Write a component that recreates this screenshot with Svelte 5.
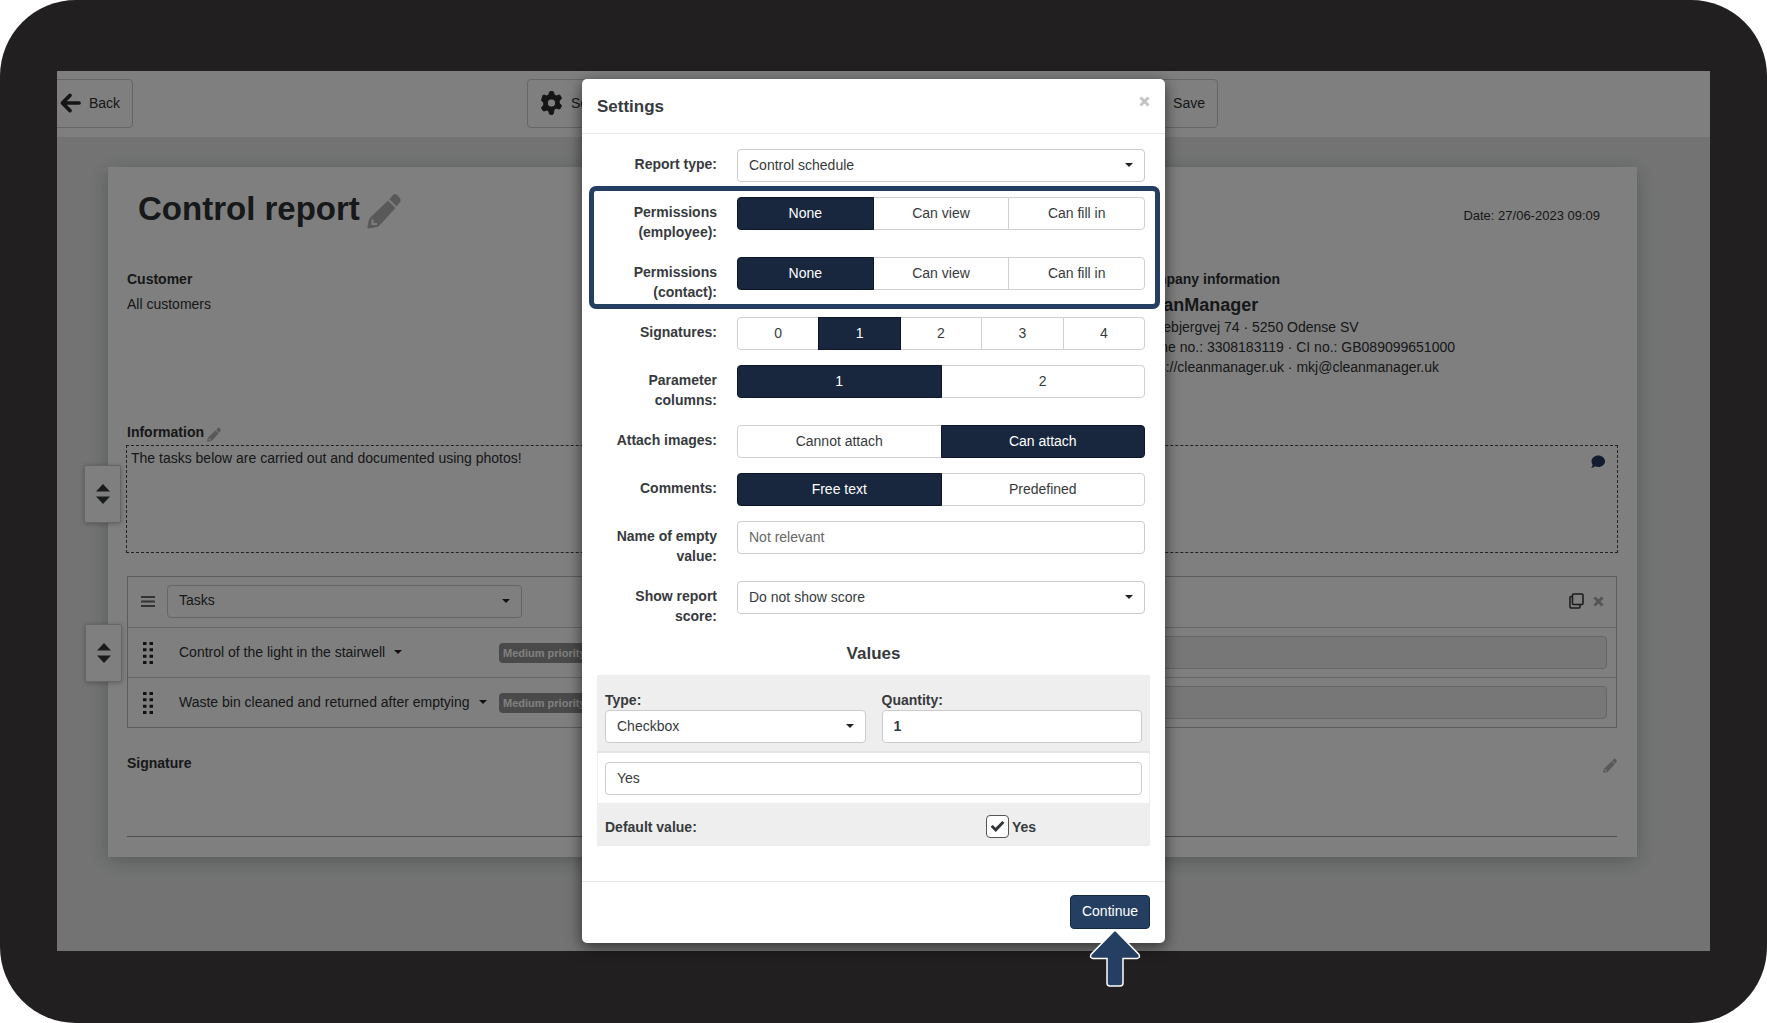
<script lang="ts">
  type Toggle = { id: string; label: string; options: string[]; value: string };

  let permissions: Toggle[] = $state([
    { id: 'employee', label: 'Permissions (employee):', options: ['None', 'Can view', 'Can fill in'], value: 'None' },
    { id: 'contact', label: 'Permissions (contact):', options: ['None', 'Can view', 'Can fill in'], value: 'None' }
  ]);

  let toggles: Toggle[] = $state([
    { id: 'signatures', label: 'Signatures:', options: ['0', '1', '2', '3', '4'], value: '1' },
    { id: 'columns', label: 'Parameter columns:', options: ['1', '2'], value: '1' },
    { id: 'images', label: 'Attach images:', options: ['Cannot attach', 'Can attach'], value: 'Can attach' },
    { id: 'comments', label: 'Comments:', options: ['Free text', 'Predefined'], value: 'Free text' }
  ]);

  const tasks = ['Control of the light in the stairwell', 'Waste bin cleaned and returned after emptying'];

  let quantity = $state('1');
  let valueName = $state('Yes');
  let isDefault = $state(true);
</script>

{#snippet pencil(size: string)}
  <svg class="pencil {size}" viewBox="0 0 34 36" aria-hidden="true">
    <path d="M21 7.500 28.500 15 12.500 32.500Q11 34 9 34.300L1.800 35.500Q.3 35.600.5 34L1.600 28Q2 26 3.300 24.600Z" />
    <path d="M22.300 6.200 26 2Q28 .2 30.200 2L32.500 4.600Q34.500 7.200 32.800 9.300L29.700 13.600Z" />
    <path class="notch" d="M5.500 26.500V31H10" />
  </svg>
{/snippet}

{#snippet cross()}
  <svg class="cross" viewBox="0 0 11 11" width="11" height="11"><path d="M1.500 1.500l8 8M9.500 1.500l-8 8" /></svg>
{/snippet}

{#snippet handle()}
  <button class="handle" aria-label="Move section">
    <svg viewBox="0 0 14 20" width="14" height="20"><path d="M7 0 14 7.500H0ZM0 12.500H14L7 20Z" /></svg>
  </button>
{/snippet}

{#snippet toggleRow(t: Toggle)}
  <div class="row">
    <span class="label" id="{t.id}-label">{t.label}</span>
    <div class="toggle" role="group" aria-labelledby="{t.id}-label">
      {#each t.options as option}
        <button class:active={t.value === option} aria-pressed={t.value === option} onclick={() => (t.value = option)}>{option}</button>
      {/each}
    </div>
  </div>
{/snippet}

<div class="bezel">
  <div class="screen">
    <div class="page">
      <header>
        <button class="tool">
          <svg viewBox="0 0 22 20" width="21" height="20"><path class="line" d="M20 10H3M10.500 2 2.500 10l8 8" /></svg>
          Back
        </button>
        <div class="tools">
          <button class="tool">
            <svg class="gear" viewBox="0 0 24 24" width="23" height="24">
              <path fill-rule="evenodd" d="M9.800.8Q10 0 11 0h2q1 0 1.200.8l.6 2.700q1.200.4 2.200 1.100l2.600-.9q.9-.3 1.400.6l1.200 2.100q.5.900-.2 1.500l-2 1.900q.3 1.200 0 2.400l2 1.900q.7.600.2 1.500l-1.200 2.100q-.5.900-1.400.6l-2.600-.9q-1 .7-2.200 1.100l-.6 2.700Q14 24 13 24h-2q-1 0-1.200-.8l-.6-2.700q-1.200-.4-2.200-1.100l-2.600.9q-.9.300-1.400-.6l-1.200-2.100q-.5-.9.200-1.500l2-1.900q-.3-1.200 0-2.400l-2-1.900q-.7-.6-.2-1.500L3 4.300q.5-.9 1.400-.6l2.600.9q1-.7 2.200-1.100ZM12 7.800a4.200 4.200 0 1 0 0 8.400 4.200 4.200 0 0 0 0-8.400Z" />
            </svg>
            Settings
          </button>
          <button class="tool">
            <svg viewBox="0 0 24 24" width="23" height="24">
              <path fill-rule="evenodd" d="M2 2h16l6 6v14H2ZM6 4v6h11V4ZM13 13a4 4 0 1 0 0 8 4 4 0 0 0 0-8Z" />
            </svg>
            Save
          </button>
        </div>
      </header>

      <main>
        <article>
          <div class="titlebar">
            <h1>Control report {@render pencil('large')}</h1>
            <span class="date">Date: 27/06-2023 09:09</span>
          </div>

          <div class="parties">
            <div>
              <h2>Customer</h2>
              <p>All customers</p>
            </div>
            <div class="company">
              <h2>Company information</h2>
              <p class="name">CleanManager</p>
              <p>Holkebjergvej 74 · 5250 Odense SV</p>
              <p>Phone no.: 3308183119 · CI no.: GB089099651000</p>
              <p>https://cleanmanager.uk · mkj@cleanmanager.uk</p>
            </div>
          </div>

          <h2 class="info-title">Information {@render pencil('small')}</h2>
          <section class="info">
            {@render handle()}
            <p>The tasks below are carried out and documented using photos!</p>
            <svg class="comment" viewBox="0 0 14 14" width="14" height="14">
              <path d="M7.300.5C11 .5 14 3 14 6.200S11 12 7.300 12c-1.200 0-2.300-.2-3.300-.7-1 .9-2.400 1.700-4 1.700 1-1 1.500-2.200 1.600-3.300C.8 8.700.5 7.500.5 6.200.5 3 3.600.5 7.300.5Z" />
            </svg>
          </section>

          <section class="tasks">
            {@render handle()}
            <div class="task-head">
              <svg class="bars" viewBox="0 0 14 11" width="14" height="11"><path d="M0 1h14M0 5.500h14M0 10h14" /></svg>
              <div class="select">
                <select aria-label="Section type"><option>Tasks</option></select>
              </div>
              <div class="actions">
                <button class="icon" aria-label="Copy">
                  <svg viewBox="0 0 15 16" width="15" height="16"><path d="M4.500 1h8.500q1 0 1 1v8.500q0 1-1 1H4.500q-1 0-1-1V2q0-1 1-1ZM3.500 3.500H2q-1 0-1 1V14q0 1 1 1h8q1 0 1-1v-2.500" /></svg>
                </button>
                <button class="icon" aria-label="Remove">{@render cross()}</button>
              </div>
            </div>
            {#each tasks as task}
              <div class="task">
                <svg class="dots" viewBox="0 0 10 22" width="10" height="22">
                  <path d="M0 1.500h3.500M6.500 1.500H10M0 7.800h3.500M6.500 7.800H10M0 14.200h3.500M6.500 14.200H10M0 20.500h3.500M6.500 20.500H10" />
                </svg>
                <div class="task-name"><button class="drop">{task}<i class="caret"></i></button></div>
                <span class="badge">Medium priority</span>
                <input disabled aria-label={task} />
              </div>
            {/each}
          </section>

          <div class="signature">
            <h2>Signature</h2>
            {@render pencil('small')}
          </div>
        </article>
      </main>
    </div>

    <div class="overlay">
      <div class="modal" role="dialog" aria-labelledby="modal-title">
        <div class="modal-header">
          <h3 id="modal-title">Settings</h3>
          <button class="icon" aria-label="Close">{@render cross()}</button>
        </div>

        <div class="modal-body">
          <div class="form">
            <div class="row">
              <label class="label" for="type">Report type:</label>
              <div class="select"><select id="type"><option>Control schedule</option></select></div>
            </div>
            <div class="marked">
              {#each permissions as t}
                {@render toggleRow(t)}
              {/each}
            </div>
            {#each toggles as t}
              {@render toggleRow(t)}
            {/each}
            <div class="row">
              <label class="label" for="empty">Name of empty value:</label>
              <input id="empty" placeholder="Not relevant" />
            </div>
            <div class="row">
              <label class="label" for="score">Show report score:</label>
              <div class="select"><select id="score"><option>Do not show score</option></select></div>
            </div>
          </div>

          <h3 class="values-title">Values</h3>
          <div class="values">
            <div class="value-head">
              <div>
                <label for="value-type">Type:</label>
                <div class="select"><select id="value-type"><option>Checkbox</option></select></div>
              </div>
              <div>
                <label for="quantity">Quantity:</label>
                <input id="quantity" class="strong" bind:value={quantity} />
              </div>
            </div>
            <div class="value-name">
              <input aria-label="Value name" bind:value={valueName} />
            </div>
            <div class="value-default">
              <span>Default value:</span>
              <label><input type="checkbox" bind:checked={isDefault} />Yes</label>
            </div>
          </div>
        </div>

        <div class="modal-footer">
          <button class="continue">Continue</button>
          <svg class="pointer" viewBox="0 0 52 58" width="52" height="58">
            <path d="M24.400 2.500Q26 .5 27.600 2.500L50 25.500Q51.500 29 48 29.500H34V54Q34 57 31 57H21Q18 57 18 54V29.500H4Q.5 29 2 25.500Z" />
          </svg>
        </div>
      </div>
    </div>
  </div>
</div>

<style>
  :global(body) {
    background: #fff;
    color: #373a3d;
    font: 14px/20px "Liberation Sans", Arial, sans-serif;
  }
  .bezel, .bezel * { box-sizing: border-box; }
  h1, h2, h3, p { margin: 0; }
  h2 { font-size: 14px; line-height: 20px; }
  h3 { font-size: 17px; line-height: 20px; }
  button, input, select {
    font: inherit;
    color: inherit;
  }
  svg { display: block; }

  .bezel {
    min-height: 100vh;
    padding: 71px 57px 72px;
    display: flex;
    background: #221f20;
    border-radius: 76px;
  }
  .screen {
    position: relative;
    flex: 1;
    display: flex;
    min-width: 0;
  }
  .page {
    flex: 1;
    min-width: 0;
    overflow: hidden;
    background: #e6e7e7;
    color: #2e3032;
  }

  header {
    display: grid;
    grid-template-columns: 1fr 691px 1fr;
    justify-items: start;
    margin-left: -22px;
    padding: 8px 12px 9px;
    background: #fff;
  }
  .tools {
    display: flex;
    justify-content: space-between;
    width: 100%;
  }
  .tool {
    height: 49px;
    padding: 0 12px 2px;
    display: flex;
    align-items: center;
    gap: 8px;
    background: #fff;
    border: 1px solid #ccc;
    border-radius: 4px;
  }
  .line {
    fill: none;
    stroke: #2a2a2a;
    stroke-width: 3.800;
    stroke-linecap: round;
    stroke-linejoin: round;
  }
  .tool svg {
    fill: #2a2a2a;
    overflow: visible;
  }
  .gear {
    stroke: #2a2a2a;
    stroke-width: 1;
  }

  main {
    margin-left: -22px;
    padding: 30px 73px 90px;
  }
  article {
    padding: 22px 20px 20px 19px;
    background: #fff;
    box-shadow: 0 4px 18px rgba(0, 30, 20, 0.24);
  }
  .titlebar {
    display: flex;
    justify-content: space-between;
    align-items: baseline;
    padding: 0 17px 0 11px;
  }
  h1 {
    display: flex;
    gap: 7px;
    font-size: 33px;
    line-height: 40px;
  }
  .date { font-size: 13px; }
  .pencil {
    fill: #b3b3b3;
    flex: none;
  }
  .pencil.large {
    width: 34px;
    height: 36px;
    margin-top: 4px;
  }
  .pencil.small {
    width: 14px;
    height: 15px;
    margin-top: 5px;
  }
  .notch {
    fill: none;
    stroke: #fff;
    stroke-width: 2;
  }
  .parties {
    display: grid;
    grid-template-columns: 2fr 1fr;
    margin: 40px 0 45px;
  }
  .parties h2 { margin-bottom: 5px; }
  .company { padding-left: 15px; }
  .name {
    font-size: 18px;
    line-height: 23px;
    font-weight: bold;
  }
  .info-title {
    display: flex;
    gap: 3px;
    margin-bottom: 3px;
  }
  .info {
    position: relative;
    display: flex;
    justify-content: space-between;
    height: 108px;
    margin: 0 -1px 23px;
    padding: 2px 12px 0 4px;
    border: 1px dashed #444;
  }
  .comment {
    margin-top: 7px;
    fill: #243a60;
  }
  .handle {
    position: absolute;
    top: 47px;
    left: -43px;
    width: 37px;
    height: 58px;
    padding: 0;
    display: grid;
    place-items: center;
    background: #fff;
    border: 1px solid #ccc;
    border-radius: 2px;
    box-shadow: 0 1px 5px rgba(0, 0, 0, 0.25);
    fill: #333639;
  }
  .info .handle { top: 19px; }

  .tasks {
    position: relative;
    border: 1px solid #bbb;
  }
  .task-head, .task {
    display: grid;
    align-items: center;
    height: 50px;
  }
  .task-head {
    grid-template-columns: 39px 355px 1fr;
    padding-bottom: 2px;
  }
  .task {
    grid-template-columns: 39px 332px auto 1fr;
    padding-right: 9px;
    border-top: 1px solid #ccc;
  }
  .bars, .dots {
    justify-self: center;
    stroke: #666;
    stroke-width: 2;
  }
  .dots {
    stroke: #222;
    stroke-width: 3;
  }
  .actions {
    display: flex;
    align-items: center;
    justify-self: end;
    gap: 9px;
    padding-right: 12px;
  }
  .icon {
    padding: 0;
    background: none;
    border: none;
    fill: none;
    stroke: #333;
    stroke-width: 1.500;
  }
  .cross {
    stroke: #c4c4c4;
    stroke-width: 3;
  }
  .actions .cross { stroke: #aaa; }
  .drop {
    display: flex;
    align-items: center;
    gap: 9px;
    padding: 0 12px 2px;
    background: none;
    border: none;
    white-space: nowrap;
  }
  .caret, .select::after {
    border: 4px solid transparent;
    border-top-color: #222;
    border-bottom: 0;
  }
  .badge {
    padding: 0 4px;
    margin-right: 12px;
    background: #959595;
    color: #fff;
    border-radius: 4px;
    font-size: 11px;
    font-weight: bold;
  }
  .signature {
    display: flex;
    justify-content: space-between;
    height: 84px;
    margin-top: 25px;
    border-bottom: 1px solid #999;
  }

  .overlay {
    position: absolute;
    inset: 0;
    padding: 8px 20px 0 0;
    display: flex;
    justify-content: center;
    align-items: flex-start;
    background: rgba(0, 0, 0, 0.5);
  }
  .modal {
    width: 583px;
    background: #fff;
    border-radius: 5px;
    box-shadow: 0 4px 15px rgba(0, 0, 0, 0.6);
  }
  .modal-header {
    display: flex;
    justify-content: space-between;
    align-items: flex-start;
    padding: 17px 15px 16px;
    border-bottom: 1px solid #e8e8e8;
  }
  .modal-header h3 { padding-top: 1px; }
  .modal-body { padding: 15px 15px 35px; }
  .form { margin-right: 5px; }
  .row {
    display: grid;
    grid-template-columns: 120px 1fr;
    align-items: start;
    gap: 20px;
    margin-bottom: 15px;
  }
  .label {
    padding-top: 5px;
    text-align: right;
  }
  .label, label, .value-default { font-weight: bold; }
  .marked { position: relative; }
  .marked::after {
    content: "";
    position: absolute;
    inset: -11px -15px -7px -8px;
    border: 5px solid #253f63;
    border-radius: 7px;
    pointer-events: none;
  }
  .toggle {
    display: flex;
    height: 33px;
  }
  .toggle button {
    flex: 1;
    padding: 0 0 2px;
    background: #fff;
    border: 1px solid #d0d0d0;
    margin-left: -1px;
  }
  .toggle button:first-child {
    margin-left: 0;
    border-radius: 4px 0 0 4px;
  }
  .toggle button:last-child { border-radius: 0 4px 4px 0; }
  .toggle .active {
    position: relative;
    background: #18273d;
    border-color: #0c1626;
    color: #fff;
  }
  .select {
    position: relative;
    font-weight: normal;
  }
  .select::after {
    content: "";
    position: absolute;
    right: 12px;
    top: 14px;
    pointer-events: none;
  }
  select, input:not([type="checkbox"]) {
    display: block;
    width: 100%;
    height: 33px;
    padding: 0 11px 2px;
    appearance: none;
    background: #fff;
    border: 1px solid #ccc;
    border-radius: 4px;
  }
  .task input:not([type="checkbox"]) { background: #eee; }
  input::placeholder { color: #666; }
  input.strong { font-weight: bold; }

  .values-title {
    margin: 18px 0 11px;
    text-align: center;
  }
  .value-head {
    display: grid;
    grid-template-columns: 1fr 1fr;
    gap: 16px;
    padding: 15px 8px 8px;
    background: #eee;
    border-bottom: 2px solid #e4e4e4;
  }
  .value-head label { display: block; }
  .value-name {
    padding: 9px 7px 8px;
    border: solid #eee;
    border-width: 0 1px;
  }
  .value-default {
    display: grid;
    grid-template-columns: 381px 1fr;
    align-items: center;
    height: 43px;
    padding: 4px 8px 0;
    background: #eee;
  }
  .value-default label {
    display: flex;
    align-items: center;
    gap: 3px;
  }
  .value-default input {
    appearance: none;
    width: 23px;
    height: 23px;
    margin: 0;
    background: #fff;
    border: 1px solid #555;
    border-radius: 4px;
    display: grid;
    place-items: center;
  }
  .value-default input:checked::before {
    content: "";
    width: 14px;
    height: 11px;
    background: #333639;
    clip-path: polygon(0 52%, 16% 36%, 36% 62%, 84% 0, 100% 16%, 38% 100%);
  }
  .modal-footer {
    position: relative;
    display: flex;
    justify-content: flex-end;
    padding: 13px 15px 14px;
    border-top: 1px solid #e8e8e8;
  }
  .continue {
    height: 34px;
    padding: 0 11px 2px;
    background: #253f63;
    border: 1px solid #14294a;
    border-radius: 4px;
    color: #fff;
  }
  .pointer {
    position: absolute;
    right: 24px;
    top: 47px;
    fill: #253f63;
    stroke: #fff;
    stroke-width: 1.500;
  }
</style>
